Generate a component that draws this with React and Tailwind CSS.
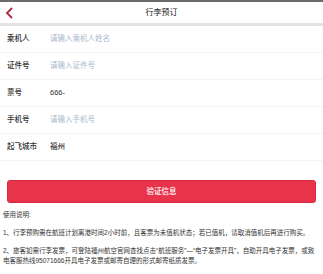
import React from 'react';

const fields = [
  { label: '乘机人', placeholder: '请输入乘机人姓名' },
  { label: '证件号', placeholder: '请输入证件号' },
  { label: '票号', value: '666-' },
  { label: '手机号', placeholder: '请输入手机号' },
  { label: '起飞城市', value: '福州' },
];

const App = () => {
  return (
    <div
      className="w-[323px] h-[274px] bg-white overflow-hidden text-[#333]"
      style={{ fontFamily: '"Liberation Sans", "Noto Sans CJK SC", sans-serif' }}
    >
      <div className="h-[2px] bg-[#6b6b6b]" />
      <div className="relative h-[21px] flex items-center justify-center">
        <svg className="absolute left-[5px] top-[5px]" width="9" height="12" viewBox="0 0 9 12">
          <path d="M7 1 L2 6 L7 11" fill="none" stroke="#b3283a" strokeWidth="1.8" />
        </svg>
        <span className="text-[8px] leading-none text-[#222]">行李预订</span>
      </div>
      <div className="h-[3px] bg-[#e4e4e4]" />

      <div>
        {fields.map((f) => (
          <div key={f.label} className="h-[27px] flex items-center border-b border-[#f4f4f4]">
            <span className="w-[50px] shrink-0 pl-[7px] text-[7.5px] font-medium leading-none text-[#333]">
              {f.label}
            </span>
            {f.value ? (
              <span className="text-[7.5px] font-medium leading-none text-[#333]">{f.value}</span>
            ) : (
              <span className="text-[7.5px] leading-none text-[#a9b8cc]">{f.placeholder}</span>
            )}
          </div>
        ))}
      </div>

      <div className="px-[7px] mt-[16px]">
        <button className="w-full h-[23px] rounded-[3px] bg-[#e8334a] border border-[#d42a40] text-white text-[7.5px] font-medium leading-none">
          验证信息
        </button>
      </div>

      <div className="px-[3px] pt-[7px] text-[6.5px] leading-[10px] text-[#333]">
        <p>使用说明:</p>
        <p className="mt-[8px]">
          1、行李预购需在航班计划离港时间2小时前，且客票为未值机状态；若已值机，请取消值机后再进行购买。
        </p>
        <p className="mt-[8px]">
          2、旅客如需行李发票，可登陆福州航空官网查找点击“航班服务”—“电子发票开具”，自助开具电子发票，或致电客服热线95071666开具电子发票或邮寄自理的形式邮寄纸质发票。
        </p>
      </div>
    </div>
  );
};

export default App;
